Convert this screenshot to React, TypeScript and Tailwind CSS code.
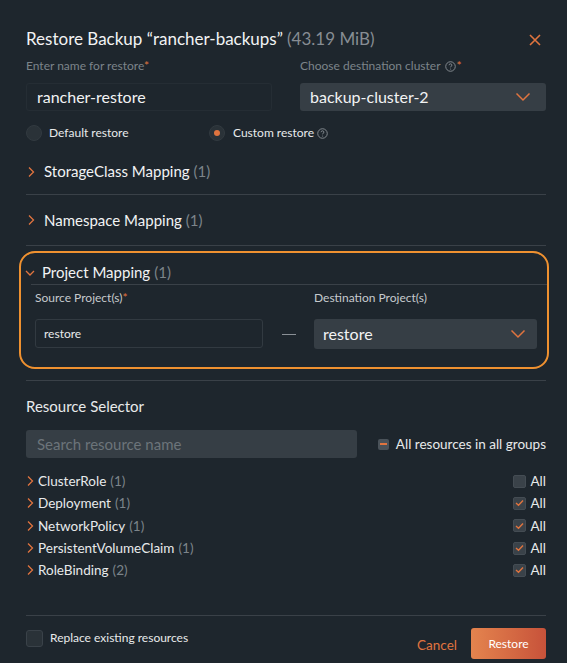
import React from "react";

const Chevron = ({ down = false, className = "" }: { down?: boolean; className?: string }) => (
  <svg width="10" height="14" viewBox="0 0 10 14" className={className}>
    {down ? (
      <path d="M1 5 L5 9 L9 5" fill="none" stroke="#e0743f" strokeWidth="1.3" />
    ) : (
      <path d="M3 2.5 L7.5 7 L3 11.5" fill="none" stroke="#e0743f" strokeWidth="1.3" />
    )}
  </svg>
);

const SelectChevron = () => (
  <svg width="16" height="10" viewBox="0 0 16 10">
    <path d="M1.5 1.5 L8 8 L14.5 1.5" fill="none" stroke="#e0743f" strokeWidth="1.5" />
  </svg>
);

const Help = () => (
  <svg width="11" height="11" viewBox="0 0 12 12" className="inline-block">
    <circle cx="6" cy="6" r="5.2" fill="none" stroke="#8a9096" strokeWidth="1" />
    <path d="M4.4 4.6 C4.4 3.6 5.1 3.1 6 3.1 C6.9 3.1 7.6 3.7 7.6 4.5 C7.6 5.5 6.1 5.6 6.1 6.9" fill="none" stroke="#8a9096" strokeWidth="1" />
    <circle cx="6.1" cy="8.7" r="0.6" fill="#8a9096" />
  </svg>
);

const Check = ({ checked }: { checked: boolean }) => (
  <div className="w-[13px] h-[13px] rounded-[2px] bg-[#3a4249] border border-[#444c53] flex items-center justify-center">
    {checked && (
      <svg width="9" height="8" viewBox="0 0 9 8">
        <path d="M1 4 L3.5 6.3 L8 1.5" fill="none" stroke="#e0743f" strokeWidth="1.4" />
      </svg>
    )}
  </div>
);

const rows = [
  { name: "ClusterRole", n: 1, checked: false },
  { name: "Deployment", n: 1, checked: true },
  { name: "NetworkPolicy", n: 1, checked: true },
  { name: "PersistentVolumeClaim", n: 1, checked: true },
  { name: "RoleBinding", n: 2, checked: true },
];

export default function App() {
  return (
    <div
      className="w-[567px] h-[663px] bg-[#1e262d] text-white overflow-hidden flex flex-col pl-[26px] pr-[21px]"
      style={{ fontFamily: "Lato, 'Open Sans', sans-serif" }}
    >
      {/* title */}
      <div className="flex items-center justify-between pt-[26px] h-[52px]">
        <div className="text-[17px] leading-[22px] text-[#f2f3f4]">
          Restore Backup “rancher-backups” <span className="text-[#878d93]">(43.19 MiB)</span>
        </div>
        <svg width="12" height="12" viewBox="0 0 12 12" className="mr-[5px] mt-[2px]">
          <path d="M1 1 L11 11 M11 1 L1 11" stroke="#e0743f" strokeWidth="1.6" />
        </svg>
      </div>

      {/* name + cluster */}
      <div className="grid grid-cols-2 gap-[28px] mt-[6px]">
        <div>
          <div className="text-[12px] leading-[16px] text-[#7c848a]">
            Enter name for restore<span className="text-[#e0743f]">*</span>
          </div>
          <div className="mt-[9px] h-[28px] rounded-[3px] border border-[#252d34] flex items-center px-[10px] text-[16px] text-[#f2f3f4]">
            rancher-restore
          </div>
        </div>
        <div>
          <div className="text-[12px] leading-[16px] text-[#7c848a] flex items-center gap-[1px]">
            Choose destination cluster <span className="ml-[3px]"><Help /></span>
            <span className="text-[#e0743f]">*</span>
          </div>
          <div className="mt-[9px] h-[28px] rounded-[3px] bg-[#363e45] flex items-center justify-between pl-[10px] pr-[15px] text-[16px] text-[#f2f3f4]">
            backup-cluster-2
            <SelectChevron />
          </div>
        </div>
      </div>

      {/* radios */}
      <div className="flex items-center mt-[8px] h-[28px] text-[12px] text-[#e8eaeb]">
        <div className="flex items-center w-[183px]">
          <div className="w-[16px] h-[16px] rounded-full bg-[#2a3238] border border-[#323a40]" />
          <span className="ml-[7px]">Default restore</span>
        </div>
        <div className="flex items-center">
          <div className="w-[16px] h-[16px] rounded-full bg-[#2a3238] border border-[#323a40] flex items-center justify-center">
            <div className="w-[6px] h-[6px] rounded-full bg-[#e0743f]" />
          </div>
          <span className="ml-[8px]">Custom restore</span>
          <span className="ml-[3px] flex items-center"><Help /></span>
        </div>
      </div>

      {/* storage class */}
      <div className="flex items-center h-[48px] pt-[2px] border-b border-[#3a4148]">
        <Chevron />
        <span className="ml-[8px] text-[15px] text-[#f2f3f4]">StorageClass Mapping</span>
        <span className="ml-[4px] text-[15px] text-[#7c848a]">(1)</span>
      </div>
      <div className="flex items-center h-[51px] border-b border-[#3a4148]">
        <Chevron />
        <span className="ml-[8px] text-[15px] text-[#f2f3f4]">Namespace Mapping</span>
        <span className="ml-[4px] text-[15px] text-[#7c848a]">(1)</span>
      </div>

      {/* project mapping highlighted */}
      <div className="mt-[5px] -ml-[7px] -mr-[3px] rounded-[16px] border-2 border-[#ef9130] h-[118px] pl-[4px]">
        <div className="flex items-center h-[31px] pt-[8px]">
          <Chevron down />
          <span className="ml-[7px] text-[15px] text-[#f2f3f4]">Project Mapping</span>
          <span className="ml-[4px] text-[15px] text-[#7c848a]">(1)</span>
        </div>
        <div className="ml-[6px] border-t border-[#3a4148]" />
        <div className="flex pl-[10px] pr-[10px] mt-[5px]">
          <div className="w-[228px]">
            <div className="text-[12px] leading-[16px] text-[#c6cacd]">
              Source Project(s)<span className="text-[#e0743f]">*</span>
            </div>
            <div className="mt-[13px] h-[29px] rounded-[3px] border border-[#323a41] flex items-center px-[8px] text-[12px] text-[#e8eaeb]">
              restore
            </div>
          </div>
          <div className="w-[51px] flex items-end justify-center pb-[14px]">
            <div className="w-[14px] h-[1px] bg-[#8a9096]" />
          </div>
          <div className="flex-1">
            <div className="text-[12px] leading-[16px] text-[#c6cacd]">Destination Project(s)</div>
            <div className="mt-[13px] h-[30px] rounded-[3px] bg-[#363e45] flex items-center justify-between pl-[9px] pr-[11px] text-[16px] text-[#f2f3f4]">
              restore
              <SelectChevron />
            </div>
          </div>
        </div>
      </div>

      <div className="mt-[11px] border-t border-[#3a4148]" />

      {/* resource selector */}
      <div className="mt-[15px] text-[15px] leading-[20px] text-[#e8eaeb]">Resource Selector</div>
      <div className="flex items-center mt-[14px]">
        <div className="w-[331px] h-[28px] rounded-[3px] bg-[#363e45] flex items-center px-[11px] text-[15px] text-[#6c747a]">
          Search resource name
        </div>
        <div className="flex items-center ml-auto">
          <div className="w-[11px] h-[11px] rounded-[2px] bg-[#4a5259] flex items-center justify-center">
            <div className="w-[7px] h-[2px] bg-[#e0743f]" />
          </div>
          <span className="ml-[7px] text-[13.5px] text-[#e8eaeb]">All resources in all groups</span>
        </div>
      </div>

      <div className="mt-[12px] flex flex-col">
        {rows.map((r) => (
          <div key={r.name} className="flex items-center h-[22.3px]">
            <Chevron className="-ml-[1px]" />
            <span className="ml-[3px] text-[13.5px] text-[#e8eaeb]">{r.name}</span>
            <span className="ml-[4px] text-[13.5px] text-[#7c848a]">({r.n})</span>
            <div className="ml-auto flex items-center">
              <Check checked={r.checked} />
              <span className="ml-[5px] text-[13.5px] text-[#e8eaeb]">All</span>
            </div>
          </div>
        ))}
      </div>

      <div className="mt-[34px] border-t border-[#3a4148]" />

      <div className="flex items-start mt-[12px]">
        <div className="flex items-center mt-[1px]">
          <div className="w-[17px] h-[17px] rounded-[3px] bg-[#2a3238] border border-[#3a4249]" />
          <span className="ml-[7px] text-[12px] text-[#e8eaeb]">Replace existing resources</span>
        </div>
        <div className="ml-auto flex items-center">
          <span className="text-[13.5px] text-[#e0743f] mt-[2px]">Cancel</span>
          <div className="ml-[14px] w-[75px] h-[31px] rounded-[3px] bg-gradient-to-r from-[#e4844e] to-[#c7523a] flex items-center justify-center text-[12px] text-white">
            Restore
          </div>
        </div>
      </div>
    </div>
  );
}
